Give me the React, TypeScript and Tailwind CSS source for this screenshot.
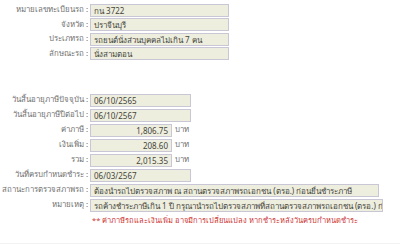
const font = { fontFamily: '"Noto Sans", "Liberation Sans", sans-serif' };

function Row({ label, children }: { label: string; children: React.ReactNode }) {
  return (
    <div className="flex items-center h-[14.5px]">
      <div className="w-[90px] pr-[2px] text-right text-[7.8px] text-[#707070] whitespace-nowrap">{label} :</div>
      {children}
    </div>
  );
}

function Box({ w, right, children }: { w: string; right?: boolean; children: React.ReactNode }) {
  return (
    <div
      className={`${w} h-[13px] border border-[#c9c6d6] bg-[#eeeedf] text-[8px] leading-[11px] text-[#45453a] px-[3px] overflow-hidden whitespace-nowrap ${right ? 'text-right' : ''}`}
    >
      {children}
    </div>
  );
}

export default function App() {
  return (
    <div className="w-[400px] h-[250px] bg-white overflow-hidden" style={font}>
      <div className="pt-[3px] flex flex-col">
        <Row label="หมายเลขทะเบียนรถ"><Box w="w-[139px]">กน 3722</Box></Row>
        <Row label="จังหวัด"><Box w="w-[139px]">ปราจีนบุรี</Box></Row>
        <Row label="ประเภทรถ"><Box w="w-[139px]">รถยนต์นั่งส่วนบุคคลไม่เกิน 7 คน</Box></Row>
        <Row label="ลักษณะรถ"><Box w="w-[139px]">นั่งสามตอน</Box></Row>
      </div>
      <div className="mt-[32px] flex flex-col gap-[0.5px]">
        <Row label="วันสิ้นอายุภาษีปัจจุบัน"><Box w="w-[101px]">06/10/2565</Box></Row>
        <Row label="วันสิ้นอายุภาษีปีต่อไป"><Box w="w-[101px]">06/10/2567</Box></Row>
        <Row label="ค่าภาษี">
          <Box w="w-[82px]" right>1,806.75</Box>
          <span className="ml-[3px] text-[7.8px] text-[#707070]">บาท</span>
        </Row>
        <Row label="เงินเพิ่ม">
          <Box w="w-[82px]" right>208.60</Box>
          <span className="ml-[3px] text-[7.8px] text-[#707070]">บาท</span>
        </Row>
        <Row label="รวม">
          <Box w="w-[82px]" right>2,015.35</Box>
          <span className="ml-[3px] text-[7.8px] text-[#707070]">บาท</span>
        </Row>
        <Row label="วันที่ครบกำหนดชำระ"><Box w="w-[101px]">06/03/2567</Box></Row>
        <Row label="สถานะการตรวจสภาพรถ"><Box w="w-[289px]">ต้องนำรถไปตรวจสภาพ ณ สถานตรวจสภาพรถเอกชน (ตรอ.) ก่อนยื่นชำระภาษี</Box></Row>
        <Row label="หมายเหตุ"><Box w="w-[293px]">รถค้างชำระภาษีเกิน 1 ปี กรุณานำรถไปตรวจสภาพที่สถานตรวจสภาพรถเอกชน (ตรอ.) ก่อนยื่นชำระภาษี</Box></Row>
        <div className="pl-[92px] text-[7.5px] text-[#cc3333] h-[14px] leading-[14px] whitespace-nowrap">
          ** ค่าภาษีรถและเงินเพิ่ม อาจมีการเปลี่ยนแปลง หากชำระหลังวันครบกำหนดชำระ
        </div>
      </div>
      <div className="mt-[16px] h-[1px] bg-[#f2f2f2]" />
      <div className="mt-[7px] ml-[112px] w-[60px] h-[20px] border border-[#bbb] rounded-[2px] bg-gradient-to-b from-white to-[#e8e8e8] text-[8px] text-[#333] text-center leading-[14px]">
        ค้นหาใหม่
      </div>
    </div>
  );
}
